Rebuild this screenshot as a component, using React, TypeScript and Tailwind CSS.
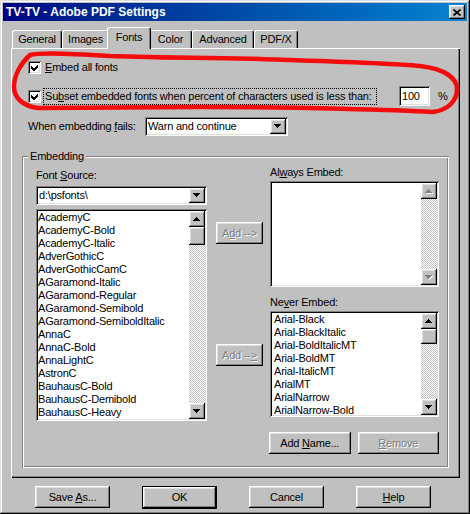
import type { ReactNode } from 'react'

const raised =
  'bg-[#c0c0c0] shadow-[inset_-1px_-1px_#000,inset_1px_1px_#fff,inset_-2px_-2px_#808080,inset_2px_2px_#dfdfdf]'
const defaultRaised =
  'bg-[#c0c0c0] shadow-[inset_-1px_-1px_#000,inset_1px_1px_#000,inset_-2px_-2px_#000,inset_2px_2px_#fff,inset_-3px_-3px_#808080,inset_3px_3px_#dfdfdf]'
const sunken =
  'bg-white shadow-[inset_1px_1px_#808080,inset_-1px_-1px_#fff,inset_2px_2px_#000,inset_-2px_-2px_#dfdfdf]'
const etched =
  'shadow-[inset_1px_1px_#808080,inset_-1px_-1px_#fff,inset_2px_2px_#fff,inset_-2px_-2px_#808080]'
const dither = 'bg-[repeating-conic-gradient(#fff_0%_25%,#c0c0c0_0%_50%)] bg-[length:2px_2px]'
const disabledText = 'text-[#808080] [text-shadow:1px_1px_0_#fff]'

const fontSources = [
  'AcademyC',
  'AcademyC-Bold',
  'AcademyC-Italic',
  'AdverGothicC',
  'AdverGothicCamC',
  'AGaramond-Italic',
  'AGaramond-Regular',
  'AGaramond-Semibold',
  'AGaramond-SemiboldItalic',
  'AnnaC',
  'AnnaC-Bold',
  'AnnaLightC',
  'AstronC',
  'BauhausC-Bold',
  'BauhausC-Demibold',
  'BauhausC-Heavy',
]

const neverEmbed = [
  'Arial-Black',
  'Arial-BlackItalic',
  'Arial-BoldItalicMT',
  'Arial-BoldMT',
  'Arial-ItalicMT',
  'ArialMT',
  'ArialNarrow',
  'ArialNarrow-Bold',
]

function Arrow({ dir, disabled }: { dir: 'up' | 'down'; disabled?: boolean }) {
  const points = dir === 'up' ? '3,0 4,0 7,4 0,4' : '0,0 7,0 4,4 3,4'
  return (
    <svg width="8" height="5" viewBox="0 0 8 5" shapeRendering="crispEdges">
      {disabled && <polygon points={points} fill="#fff" transform="translate(1 1)" />}
      <polygon points={points} fill={disabled ? '#808080' : '#000'} />
    </svg>
  )
}

function ScrollBtn({ dir, disabled }: { dir: 'up' | 'down'; disabled?: boolean }) {
  return (
    <div className={`flex h-[16px] w-[16px] shrink-0 items-center justify-center ${raised}`}>
      <Arrow dir={dir} disabled={disabled} />
    </div>
  )
}

function ScrollBar({ thumb, disabled }: { thumb?: string; disabled?: boolean }) {
  return (
    <div className="flex h-full w-[16px] shrink-0 flex-col">
      <ScrollBtn dir="up" disabled={disabled} />
      <div className={`flex-1 ${dither}`}>{thumb && <div className={`w-[16px] ${thumb} ${raised}`} />}</div>
      <ScrollBtn dir="down" disabled={disabled} />
    </div>
  )
}

function ListBox({
  items,
  className,
  thumb,
  disabled,
  pad,
}: {
  items: string[]
  className: string
  thumb?: string
  disabled?: boolean
  pad?: string
}) {
  return (
    <div className={`flex p-[2px] ${sunken} ${className}`}>
      <div className={`flex-1 overflow-hidden ${pad ?? ''}`}>
        {items.map((item) => (
          <div key={item} className="h-[13px] whitespace-nowrap leading-[13px]">
            {item}
          </div>
        ))}
      </div>
      <ScrollBar thumb={thumb} disabled={disabled} />
    </div>
  )
}

function Combo({ value, className }: { value: string; className: string }) {
  return (
    <div className={`flex h-[19px] items-center p-[2px] ${sunken} ${className}`}>
      <span className="flex-1 whitespace-nowrap pl-[1px]">{value}</span>
      <div className={`flex h-full w-[16px] items-center justify-center ${raised}`}>
        <Arrow dir="down" />
      </div>
    </div>
  )
}

function Check() {
  return (
    <div className={`h-[13px] w-[13px] shrink-0 ${sunken}`}>
      <svg width="13" height="13" viewBox="0 0 13 13" shapeRendering="crispEdges">
        <polygon points="3,5 5.5,7.5 10,3 10,6 5.5,10.5 3,8" fill="#000" />
      </svg>
    </div>
  )
}

function Button({
  children,
  className,
  disabled,
  isDefault,
}: {
  children: ReactNode
  className: string
  disabled?: boolean
  isDefault?: boolean
}) {
  return (
    <div
      className={`flex items-center justify-center whitespace-nowrap ${isDefault ? defaultRaised : raised} ${
        disabled ? disabledText : ''
      } ${className}`}
    >
      <span>{children}</span>
    </div>
  )
}

function Tab({ label, selected, className }: { label: string; selected?: boolean; className: string }) {
  return (
    <div
      className={`flex items-center justify-center rounded-t-[3px] border-l border-t border-r border-l-white border-t-white border-r-black bg-[#c0c0c0] shadow-[inset_-1px_0_#808080] ${
        selected ? 'relative z-10 -mx-[2px] -mb-[1px] h-[22px] pb-[3px]' : 'h-[18px]'
      } ${className}`}
    >
      {label}
    </div>
  )
}

function U({ children }: { children: ReactNode }) {
  return <span className="underline underline-offset-[1px]">{children}</span>
}

export default function App() {
  return (
    <div className="relative flex h-[514px] w-[470px] flex-col overflow-hidden bg-[#c0c0c0] p-[3px] font-['Liberation_Sans',Arial,sans-serif] text-[11px] leading-[13px] tracking-[-0.2px] text-black shadow-[inset_-1px_-1px_#000,inset_1px_1px_#dfdfdf,inset_-2px_-2px_#808080,inset_2px_2px_#fff]">
      {/* title bar */}
      <div className="flex h-[18px] items-center justify-between bg-linear-to-r from-[#000080] to-[#1084d0] pl-[3px] pr-[2px]">
        <span className="text-[12px] font-bold tracking-normal text-white">TV-TV - Adobe PDF Settings</span>
        <div className={`flex h-[14px] w-[16px] items-center justify-center ${raised}`}>
          <svg width="8" height="7" viewBox="0 0 8 7">
            <path d="M0.5 0.5L7.5 6.5M7.5 0.5L0.5 6.5" stroke="#000" strokeWidth="1.7" />
          </svg>
        </div>
      </div>

      {/* tabs */}
      <div className="ml-[9px] mt-[6px] flex h-[21px] items-end">
        <Tab label="General" className="w-[50px]" />
        <Tab label="Images" className="w-[47px]" />
        <Tab label="Fonts" selected className="w-[44px]" />
        <Tab label="Color" className="w-[43px]" />
        <Tab label="Advanced" className="w-[62px]" />
        <Tab label="PDF/X" className="w-[44px]" />
      </div>

      {/* tab panel */}
      <div className="ml-[8px] flex h-[430px] w-[449px] flex-col shadow-[inset_1px_1px_#fff,inset_-1px_-1px_#000,inset_-2px_-2px_#808080]">
        <div className="ml-[17px] mt-[13px] flex h-[13px] items-center">
          <Check />
          <span className="ml-[4px]">
            <U>E</U>mbed all fonts
          </span>
        </div>

        <div className="ml-[17px] mt-[12px] flex h-[20px] items-center">
          <Check />
          <div className="ml-[2px] flex h-[17px] w-[334px] items-center border border-dotted border-black px-[1px] whitespace-nowrap">
            <span>
              Su<U>b</U>set embedded fonts when percent of characters used is less than:
            </span>
          </div>
          <div className={`ml-[22px] flex h-[20px] w-[31px] items-center pl-[3px] ${sunken}`}>100</div>
          <span className="ml-[8px]">%</span>
        </div>

        <div className="ml-[17px] mt-[11px] flex h-[19px] items-center">
          <span className="w-[117px] whitespace-nowrap">
            When embedding <U>f</U>ails:
          </span>
          <Combo value="Warn and continue" className="w-[143px]" />
        </div>

        {/* Embedding group */}
        <div className={`relative ml-[11px] mt-[20px] flex h-[312px] w-[427px] ${etched}`}>
          <span className="absolute -top-[6px] left-[6px] bg-[#c0c0c0] px-[2px]">Embedding</span>

          <div className="ml-[14px] mt-[13px] flex w-[171px] flex-col">
            <span className="h-[13px]">
              Font <U>S</U>ource:
            </span>
            <Combo value="d:\psfonts\" className="mt-[4px] w-[171px]" />
            <ListBox items={fontSources} className="mt-[4px] h-[212px] w-[171px]" thumb="h-[18px]" />
          </div>

          <div className="ml-[9px] mt-[66px] flex w-[47px] flex-col">
            <Button disabled className="h-[22px] w-[47px]">
              A<U>d</U>d --&gt;
            </Button>
            <Button disabled className="mt-[100px] h-[22px] w-[47px]">
              Add --<U>&gt;</U>
            </Button>
          </div>

          <div className="ml-[7px] mt-[10px] flex w-[169px] flex-col">
            <span className="h-[13px]">
              Al<U>w</U>ays Embed:
            </span>
            <ListBox items={[]} className="mt-[2px] h-[106px] w-[169px]" disabled />
            <span className="mt-[9px] h-[13px]">
              Ne<U>v</U>er Embed:
            </span>
            <ListBox items={neverEmbed} className="mt-[2px] h-[106px] w-[169px]" thumb="h-[15px]" pad="pl-[2px]" />
            <div className="-ml-[1px] mt-[15px] flex gap-[7px]">
              <Button className="h-[22px] w-[83px]">
                Add <U>N</U>ame...
              </Button>
              <Button disabled className="h-[22px] w-[83px]">
                <U>R</U>emove
              </Button>
            </div>
          </div>
        </div>
      </div>

      {/* dialog buttons */}
      <div className="ml-[32px] mt-[8px] flex gap-[32px]">
        <Button className="h-[22px] w-[75px]">
          Save <U>A</U>s...
        </Button>
        <Button isDefault className="h-[23px] w-[75px]">
          OK
        </Button>
        <Button className="h-[22px] w-[75px]">Cancel</Button>
        <Button className="h-[22px] w-[75px]">
          <U>H</U>elp
        </Button>
      </div>

      {/* hand-drawn red marker ellipse */}
      <svg className="pointer-events-none absolute left-0 top-0" width="470" height="514" viewBox="0 0 470 514">
        <path
          d="M30 55 C40 52 80 54 110 56 C160 58 230 58 260 59 C320 61 390 63 420 66 C445 69 457 78 457 89 C457 101 448 110 433 112 C400 110 300 107 200 107 C130 107 70 108 38 108 C22 106 14 97 14 87 C14 75 21 63 30 55 Z"
          fill="none"
          stroke="#f40c0c"
          strokeWidth="4.5"
          strokeLinejoin="round"
        />
      </svg>
    </div>
  )
}
